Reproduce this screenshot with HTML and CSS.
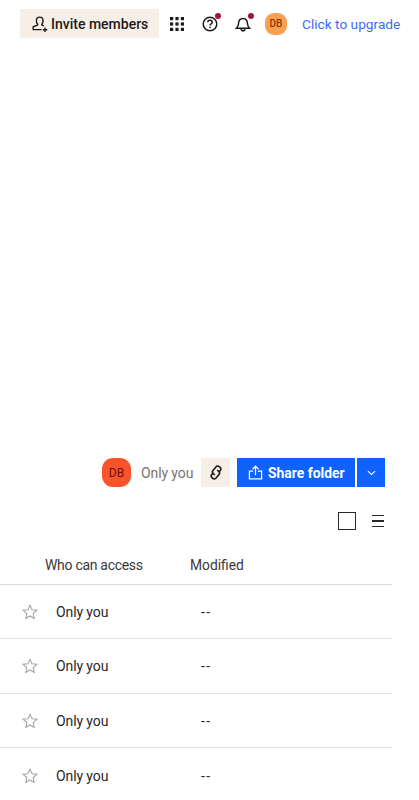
FILE: index.html
```html
<!DOCTYPE html>
<html lang="en">
<head>
<meta charset="utf-8">
<title>Folder</title>
<link rel="stylesheet" href="styles.css">
</head>
<body>
<div class="page">
  <header class="topbar">
    <button class="invite">
      <svg class="ico-user" viewBox="0 0 18 18" fill="none" stroke="#1e1919" stroke-width="1.4"><path d="M5.400 5.400a3.300 3.300 0 0 1 6.600 0v1.200c0 1-.5 1.900-1.200 2.500M5.400 5.400v1.200c0 1 .5 1.900 1.200 2.500v1L2.200 11.800v2.800h8.300"/><path d="M10.800 9.100v1l2 .8"/><path d="M14 12.400v4.600M11.700 14.700h4.600"/></svg>
      <span>Invite members</span>
    </button>
    <svg class="ico-grid" viewBox="0 0 14 14" fill="#1e1919"><rect x="0" y="0" width="3.2" height="3.2"/><rect x="5.4" y="0" width="3.2" height="3.2"/><rect x="10.8" y="0" width="3.2" height="3.2"/><rect x="0" y="5.4" width="3.2" height="3.2"/><rect x="5.4" y="5.4" width="3.2" height="3.2"/><rect x="10.8" y="5.4" width="3.2" height="3.2"/><rect x="0" y="10.8" width="3.2" height="3.2"/><rect x="5.4" y="10.8" width="3.2" height="3.2"/><rect x="10.8" y="10.8" width="3.2" height="3.2"/></svg>
    <span class="dotted help">
      <svg viewBox="0 0 16 16" fill="none" stroke="#1e1919" stroke-width="1.500"><circle cx="8" cy="8" r="6.800"/><path d="M5.800 6.300c0-1.300 1-2.100 2.200-2.100s2.200.8 2.200 2c0 1.700-2.200 1.700-2.200 3.400"/><path d="M8 10.800v1.500"/></svg>
      <i class="dot"></i>
    </span>
    <span class="dotted bell">
      <svg viewBox="0 0 16 16" fill="none" stroke="#1e1919" stroke-width="1.500"><path d="M1.500 12.200h13c-1.400-1.300-1.900-2.400-2-4.400-.1-3-1.700-5.300-4.500-5.300S3.600 4.800 3.500 7.800c-.1 2-.6 3.100-2 4.400z"/><path d="M6 13.200c.2 1 1 1.600 2 1.600s1.800-.6 2-1.600" stroke-width="1.700"/></svg>
      <i class="dot"></i>
    </span>
    <span class="avatar-small">DB</span>
    <a class="upgrade">Click to upgrade</a>
  </header>

  <section class="share-row">
    <span class="avatar-large">DB</span>
    <span class="only">Only you</span>
    <button class="link-btn">
      <svg viewBox="0 0 12 15" fill="none" stroke="#1e1919" stroke-width="1.600" stroke-linecap="round"><path d="M4.200 9.400L3.300 8.700A2.300 2.300 0 0 1 3 5.500L5.900 1.900A2.300 2.300 0 0 1 9.200 1.600L10 2.300A2.300 2.300 0 0 1 10.400 5.300L9.400 6.600"/><path d="M7.800 5.600L8.700 6.300A2.300 2.300 0 0 1 9 9.500L6.100 13.100A2.300 2.300 0 0 1 2.800 13.400L2 12.700A2.300 2.300 0 0 1 1.600 9.700L2.600 8.400"/></svg>
    </button>
    <button class="share-btn">
      <svg viewBox="0 0 16 16" fill="none" stroke="#fff" stroke-width="1.300"><path d="M8 11V1.500M4.800 4.500L8 1.300l3.200 3.200"/><path d="M5.500 6.500H1.500v8.200h13V6.500h-4"/></svg>
      <span>Share folder</span>
    </button>
    <button class="chev-btn">
      <svg viewBox="0 0 10 6" fill="none" stroke="#fff" stroke-width="1.200"><path d="M1 1l4 3.600L9 1"/></svg>
    </button>
  </section>

  <div class="view-row">
    <span class="check"></span>
    <span class="menu"><i></i><i></i><i></i></span>
  </div>

  <div class="table">
    <div class="head">
      <span class="col-access">Who can access</span>
      <span class="col-mod">Modified</span>
    </div>
    <div class="row">
      <svg class="star" viewBox="0 0 16 16" fill="none" stroke="#a9a5a0" stroke-width="1.100"><path d="M8 1.300l2 4.500 4.800.5-3.600 3.200 1 4.800L8 11.900l-4.200 2.400 1-4.800L1.200 6.300 6 5.800z"/></svg>
      <span class="cell-access">Only you</span><span class="cell-mod">--</span>
    </div>
    <div class="row">
      <svg class="star" viewBox="0 0 16 16" fill="none" stroke="#a9a5a0" stroke-width="1.100"><path d="M8 1.300l2 4.500 4.800.5-3.600 3.200 1 4.800L8 11.900l-4.200 2.400 1-4.800L1.200 6.300 6 5.800z"/></svg>
      <span class="cell-access">Only you</span><span class="cell-mod">--</span>
    </div>
    <div class="row">
      <svg class="star" viewBox="0 0 16 16" fill="none" stroke="#a9a5a0" stroke-width="1.100"><path d="M8 1.300l2 4.500 4.800.5-3.600 3.200 1 4.800L8 11.900l-4.200 2.400 1-4.800L1.200 6.300 6 5.800z"/></svg>
      <span class="cell-access">Only you</span><span class="cell-mod">--</span>
    </div>
    <div class="row last">
      <svg class="star" viewBox="0 0 16 16" fill="none" stroke="#a9a5a0" stroke-width="1.100"><path d="M8 1.300l2 4.500 4.800.5-3.600 3.200 1 4.800L8 11.900l-4.200 2.400 1-4.800L1.200 6.300 6 5.800z"/></svg>
      <span class="cell-access">Only you</span><span class="cell-mod">--</span>
    </div>
  </div>
</div>
</body>
</html>
```
FILE: styles.css
```css
* { box-sizing: border-box; }
html, body { margin: 0; padding: 0; background: #fff; }
body { font-family: Roboto, "Liberation Sans", sans-serif; color: #1e1919; overflow: hidden; }
button { border: 0; padding: 0; font: inherit; color: inherit; }
.page { width: 419px; height: 800px; overflow: hidden; }

.topbar { display: flex; align-items: center; height: 48px; padding: 0 0 1px 20px; white-space: nowrap; }
.invite { display: flex; align-items: center; width: 139px; height: 29px; padding-left: 11px; background: #f5efe8; font-size: 14px; font-weight: 500; }
.ico-user { width: 18px; height: 18px; margin-right: 2px; }
.ico-grid { width: 14px; height: 14px; margin-left: 11px; }
.dotted { position: relative; display: block; width: 16px; height: 16px; }
.dotted svg { display: block; width: 16px; height: 16px; }
.help { margin-left: 18px; }
.bell { margin-left: 17px; }
.dot { position: absolute; top: -3px; right: -3px; width: 6px; height: 6px; border-radius: 50%; background: #a50e4a; }
.avatar-small { display: flex; align-items: center; justify-content: center; width: 22px; height: 22px; margin-left: 14px; border-radius: 9px; background: #fa9f50; color: #7a3d0c; font-size: 10px; font-weight: 500; }
.upgrade { margin-left: 15px; font-size: 13.700px; color: #3b6cf6; }

.share-row { display: flex; align-items: center; height: 29px; margin-top: 410px; padding-left: 102px; }
.avatar-large { display: flex; align-items: center; justify-content: center; width: 29px; height: 29px; border-radius: 11px; background: #fa5229; color: #6d1208; font-size: 12px; }
.only { margin-left: 10px; width: 60px; font-size: 14px; color: #77736e; letter-spacing: -.1px; }
.link-btn { display: flex; align-items: center; justify-content: center; width: 29px; height: 29px; background: #f5efe8; }
.link-btn svg { width: 12px; height: 15px; }
.share-btn { display: flex; align-items: center; width: 118px; height: 29px; margin-left: 7px; padding-left: 11px; background: #0f62fe; color: #fff; font-size: 13.900px; font-weight: 700; }
.share-btn svg { width: 15px; height: 15px; margin-right: 5px; }
.chev-btn { display: flex; align-items: center; justify-content: center; width: 28px; height: 29px; margin-left: 2px; background: #0f62fe; }
.chev-btn svg { width: 9px; height: 6px; }

.view-row { display: flex; align-items: center; height: 18px; margin-top: 25px; padding-left: 338px; }
.check { display: block; width: 18px; height: 18px; border: 1.500px solid #2b2727; }
.menu { display: flex; flex-direction: column; gap: 4px; width: 12px; margin-left: 16px; }
.menu i { display: block; height: 1.500px; background: #2b2727; }

.table { width: 392px; margin-top: 25px; }
.head { display: flex; align-items: center; height: 29.500px; padding: 0 0 9px 45px; border-bottom: 1px solid #dedbd7; font-size: 14px; color: #3b3838; }
.col-access { width: 145px; letter-spacing: -.3px; }
.col-mod { font-size: 13.800px; }
.row { display: flex; align-items: center; height: 54.500px; padding: 1px 0 0 22px; border-bottom: 1px solid #e3e0dd; font-size: 14px; color: #2b2727; }
.row.last { border-bottom: 0; }
.star { width: 16px; height: 16px; }
.cell-access { width: 145px; margin-left: 18px; letter-spacing: -.1px; }
.cell-mod { letter-spacing: 1.500px; }
```
